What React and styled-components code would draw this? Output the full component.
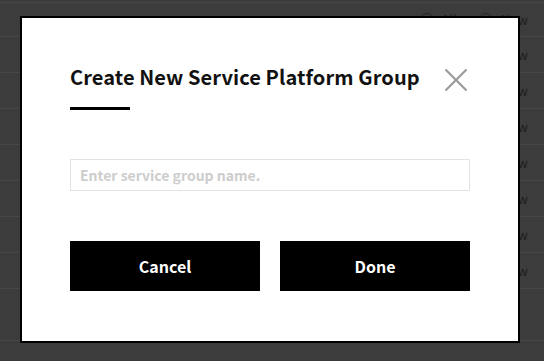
import React from "react";
import styled, { createGlobalStyle } from "styled-components";

const Global = createGlobalStyle`
  html, body { margin: 0; padding: 0; background: #3c3c3c; }
  body { font-family: "Noto Sans CJK KR", "Noto Sans", sans-serif; }
  * { box-sizing: border-box; }
`;

const Page = styled.div`
  position: relative;
  width: 544px;
  height: 361px;
  overflow: hidden;
  background: #3c3c3c;
`;

const Table = styled.div`
  display: flex;
  flex-direction: column;
  padding-top: 2px;
`;

const Row = styled.div`
  display: flex;
  align-items: center;
  justify-content: flex-end;
  gap: 8px;
  height: ${(p) => p.$h}px;
  border-top: 1px solid #464646;
  padding-right: 16px;
  font-size: 13px;
  color: #1e1e1e;
`;

const Radio = styled.span`
  width: 14px;
  height: 14px;
  border-radius: 50%;
  border: 1px solid #262626;
`;

const RadioLabel = styled.span`
  margin-right: ${(p) => p.$mr || 0}px;
`;

const Modal = styled.div`
  position: absolute;
  left: 20px;
  top: 16px;
  width: 500px;
  background: #fff;
  border: 2px solid #000;
  padding: 44px 48px 50px;
  display: flex;
  flex-direction: column;
`;

const TitleRow = styled.div`
  display: flex;
  justify-content: space-between;
  align-items: flex-start;
`;

const Title = styled.h2`
  margin: 0;
  font-size: 20px;
  line-height: 30px;
  font-weight: 700;
  letter-spacing: 0.1px;
  color: #111;
`;

const CloseButton = styled.button`
  margin: 6px 2px 0 0;
  padding: 0;
  border: none;
  background: none;
  width: 24px;
  height: 24px;
  display: flex;
  cursor: pointer;
`;

const Bar = styled.div`
  width: 60px;
  height: 3px;
  background: #000;
  margin-top: 15px;
`;

const Input = styled.input`
  margin-top: 49px;
  height: 32px;
  width: 100%;
  border: 1px solid #e3e3e3;
  padding: 0 9px;
  font-family: "Noto Sans CJK KR", "Noto Sans", sans-serif;
  font-size: 14px;
  font-weight: 700;
  color: #333;
  outline: none;
  &::placeholder { color: #cdcdcd; }
`;

const Actions = styled.div`
  margin-top: 50px;
  display: grid;
  grid-template-columns: 1fr 1fr;
  gap: 20px;
`;

const Button = styled.button`
  height: 50px;
  border: none;
  background: #000;
  color: #fff;
  font-family: "Noto Sans CJK KR", "Noto Sans", sans-serif;
  font-size: 16px;
  font-weight: 700;
  cursor: pointer;
`;

const rows = [36, 36, 36, 36, 36, 36, 36];

export default function App() {
  return (
    <Page>
      <Global />
      <Table>
        <Row $h={34}>
          <Radio />
          <RadioLabel $mr={14}>All</RadioLabel>
          <Radio />
          <RadioLabel>New</RadioLabel>
        </Row>
        {rows.map((h, i) => (
          <Row key={i} $h={h}>View</Row>
        ))}
        <Row $h={52} />
        <Row $h={30} />
      </Table>
      <Modal>
        <TitleRow>
          <Title>Create New Service Platform Group</Title>
          <CloseButton aria-label="Close">
            <svg width="24" height="24" viewBox="0 0 24 24">
              <path d="M1.5 1.5 L22.5 22.5 M22.5 1.5 L1.5 22.5" stroke="#9a9a9a" strokeWidth="2.2" fill="none" />
            </svg>
          </CloseButton>
        </TitleRow>
        <Bar />
        <Input placeholder="Enter service group name." />
        <Actions>
          <Button>Cancel</Button>
          <Button>Done</Button>
        </Actions>
      </Modal>
    </Page>
  );
}
